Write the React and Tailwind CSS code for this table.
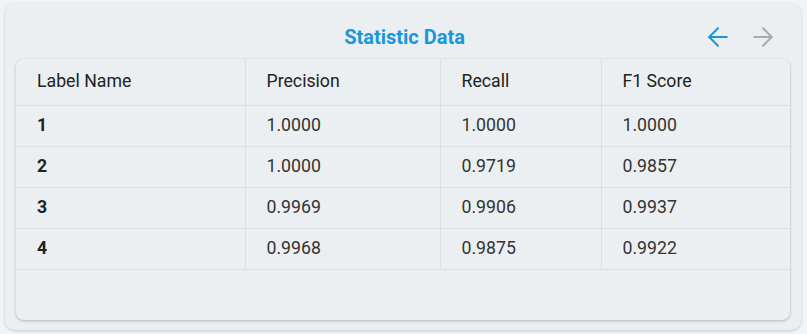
import { ArrowLeft, ArrowRight } from 'lucide-react';

const rows = [
  ['1', '1.0000', '1.0000', '1.0000'],
  ['2', '1.0000', '0.9719', '0.9857'],
  ['3', '0.9969', '0.9906', '0.9937'],
  ['4', '0.9968', '0.9875', '0.9922'],
];

export default function App() {
  return (
    <div className="w-[807px] h-[334px] bg-[#f1f3f5] pt-[3px] pl-[5px] pr-[6px] pb-[4px]" style={{ fontFamily: 'Roboto, "Liberation Sans", sans-serif' }}>
      <div className="h-full bg-[#eceff1] rounded-[10px] shadow-[0_1px_3px_rgba(0,0,0,0.18)] px-[11px] pb-[10px] flex flex-col">
        <div className="h-[56px] flex items-center relative pt-[11px]">
          <h2 className="flex-1 text-center text-[20px] font-bold text-[#1a96d9] pl-[3px]">Statistic Data</h2>
          <div className="absolute right-[12px] top-[19px] flex items-center gap-[15px]">
            <ArrowLeft className="w-[30px] h-[30px] text-[#1a96d9]" strokeWidth={1.6} />
            <ArrowRight className="w-[30px] h-[30px] text-[#a9acae]" strokeWidth={1.6} />
          </div>
        </div>
        <div className="flex-1 bg-[#eceff1] rounded-[8px] shadow-[0_1px_3px_rgba(0,0,0,0.25)] overflow-hidden">
          <table className="w-full border-collapse text-[17.7px] text-[#222]">
            <colgroup>
              <col className="w-[229px]" />
              <col className="w-[195px]" />
              <col className="w-[161px]" />
              <col />
            </colgroup>
            <thead>
              <tr className="h-[46px] border-b border-[#dcdfe1]">
                <th className="text-left font-normal pl-[21px] border-r border-[#dcdfe1]">Label Name</th>
                <th className="text-left font-normal pl-[21px] border-r border-[#dcdfe1]">Precision</th>
                <th className="text-left font-normal pl-[21px] border-r border-[#dcdfe1]">Recall</th>
                <th className="text-left font-normal pl-[21px]">F1 Score</th>
              </tr>
            </thead>
            <tbody>
              {rows.map((r) => (
                <tr key={r[0]} className="h-[41px] border-b border-[#dcdfe1]">
                  <td className="pl-[21px] font-bold border-r border-[#dcdfe1]">{r[0]}</td>
                  <td className="pl-[21px] text-[#333] border-r border-[#dcdfe1]">{r[1]}</td>
                  <td className="pl-[21px] text-[#333] border-r border-[#dcdfe1]">{r[2]}</td>
                  <td className="pl-[21px] text-[#333]">{r[3]}</td>
                </tr>
              ))}
            </tbody>
          </table>
        </div>
      </div>
    </div>
  );
}
